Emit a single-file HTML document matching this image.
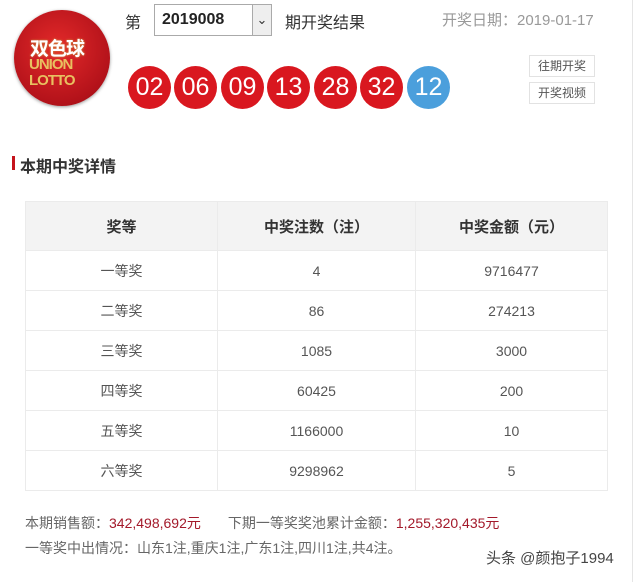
<!DOCTYPE html>
<html><head><meta charset="utf-8"><style>
*{margin:0;padding:0;box-sizing:border-box}
body{width:640px;height:582px;background:#fff;font-family:"Liberation Sans","Noto Sans CJK SC",sans-serif;position:relative;overflow:hidden;color:#333}
.a{position:absolute}
.ball{position:absolute;top:66px;width:43px;height:43px;border-radius:50%;background:#d9171f;color:#fff;font-size:25px;text-align:center;line-height:43px}
.btn{position:absolute;left:529px;width:66px;height:22px;border:1px solid #e2e2e2;font-size:12px;color:#555;text-align:center;line-height:20px}
table{position:absolute;left:25px;top:201px;width:583px;border-collapse:collapse;font-size:14px;color:#555}
td,th{border:1px solid #ebebeb;text-align:center;height:40px}
th{height:49px;background:#f3f3f3;font-weight:bold;color:#333;font-size:15px}
</style></head><body>
<div class="a" style="right:7px;top:0;width:1px;height:582px;background:#e5e5e5"></div>
<div class="a" style="left:14px;top:10px;width:96px;height:96px;border-radius:50%;background:radial-gradient(circle at 45% 40%,#e42a2a,#b3121a 70%,#8a0c12);box-shadow:0 1px 3px #999"></div>
<div class="a" style="left:30px;top:34px;font-size:19px;color:#fff;font-weight:bold;letter-spacing:-1px;text-shadow:0 0 2px #c8a040">双色球</div>
<div class="a" style="left:29px;top:56px;font-size:15px;color:#e8c060;font-weight:bold;letter-spacing:-1px">UNION</div>
<div class="a" style="left:29px;top:72px;font-size:15px;color:#e8c060;font-weight:bold;letter-spacing:-1px">LOTTO</div>
<div class="a" style="left:125px;top:9px;font-size:16px">第</div>
<div class="a" style="left:154px;top:4px;width:118px;height:32px;border:1px solid #aaa;background:#fff"></div>
<div class="a" style="left:162px;top:11px;font-size:16px;font-weight:bold;color:#222">2019008</div>
<div class="a" style="left:252px;top:4px;width:20px;height:32px;border:1px solid #aaa;background:#eee;text-align:center;font-size:13px;line-height:30px">&#8964;</div>
<div class="a" style="left:285px;top:9px;font-size:16px">期开奖结果</div>
<div class="a" style="left:442px;top:9px;font-size:15px;color:#999">开奖日期：2019-01-17</div>
<div class="ball" style="left:128px">02</div>
<div class="ball" style="left:174px">06</div>
<div class="ball" style="left:221px">09</div>
<div class="ball" style="left:267px">13</div>
<div class="ball" style="left:314px">28</div>
<div class="ball" style="left:360px">32</div>
<div class="ball" style="left:407px;background:#4b9fdc">12</div>
<div class="btn" style="top:55px">往期开奖</div>
<div class="btn" style="top:82px">开奖视频</div>
<div class="a" style="left:12px;top:156px;width:3px;height:14px;background:#c5141c"></div>
<div class="a" style="left:20px;top:153px;font-size:16px;font-weight:bold;color:#333">本期中奖详情</div>
<table>
<tr><th style="width:192px">奖等</th><th style="width:198px">中奖注数（注）</th><th>中奖金额（元）</th></tr>
<tr><td>一等奖</td><td>4</td><td>9716477</td></tr>
<tr><td>二等奖</td><td>86</td><td>274213</td></tr>
<tr><td>三等奖</td><td>1085</td><td>3000</td></tr>
<tr><td>四等奖</td><td>60425</td><td>200</td></tr>
<tr><td>五等奖</td><td>1166000</td><td>10</td></tr>
<tr><td>六等奖</td><td>9298962</td><td>5</td></tr>
</table>
<div class="a" style="left:25px;top:513px;font-size:14px;color:#666;white-space:nowrap">本期销售额：<span style="color:#a3192a">342,498,692元</span><span style="display:inline-block;width:27px"></span>下期一等奖奖池累计金额：<span style="color:#a3192a">1,255,320,435元</span></div>
<div class="a" style="left:25px;top:538px;font-size:14px;color:#666;white-space:nowrap">一等奖中出情况：山东1注,重庆1注,广东1注,四川1注,共4注。</div>
<div class="a" style="left:486px;top:547px;font-size:15px;color:#444;white-space:nowrap">头条 @颜抱子1994</div>
</body></html>
